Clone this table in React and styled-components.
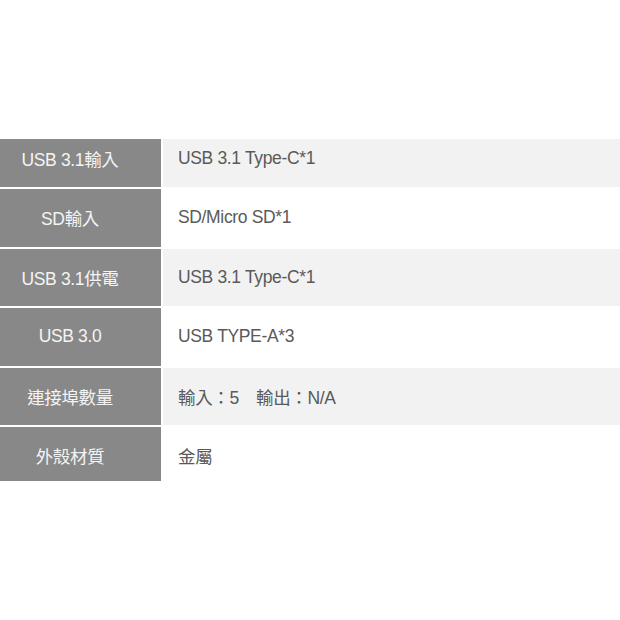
import React from 'react';
import styled, {createGlobalStyle} from 'styled-components';

const SPECS = [
  {label: 'USB 3.1輸入', value: 'USB 3.1 Type-C*1'},
  {label: 'SD輸入', value: 'SD/Micro SD*1'},
  {label: 'USB 3.1供電', value: 'USB 3.1 Type-C*1'},
  {label: 'USB 3.0', value: 'USB TYPE-A*3'},
  {label: '連接埠數量', value: '輸入：5　輸出：N/A'},
  {label: '外殼材質', value: '金屬'},
];

const GlobalStyle = createGlobalStyle`
  html, body {
    margin: 0;
    padding: 0;
    background: #fff;
  }
  body {
    font-family: "Liberation Sans", "Noto Sans CJK TC", sans-serif;
  }
`;

function App() {
  return (
    <>
      <GlobalStyle />
      <Frame>
        <Table>
          {SPECS.map((spec, i) => (
            <Row key={spec.label}>
              <Label>{spec.label}</Label>
              <Value $shaded={i % 2 === 0}>{spec.value}</Value>
            </Row>
          ))}
        </Table>
      </Frame>
    </>
  );
}

const Frame = styled.div`
  margin-top: 139px;
  width: 620px;
  height: 342px;
  overflow: hidden;
`;

const Table = styled.div`
  margin-top: -9.5px;
  display: flex;
  flex-direction: column;
`;

const Row = styled.div`
  display: grid;
  grid-template-columns: 161px 1fr;
  column-gap: 2px;
  height: 57.5px;
  border-bottom: 2px solid #fff;
  font-size: 17.5px;
  letter-spacing: -0.35px;
`;

const Label = styled.div`
  display: flex;
  align-items: center;
  justify-content: center;
  padding-right: 21px;
  background: #888;
  color: #f4f4f4;
`;

const Value = styled.div`
  display: flex;
  align-items: center;
  padding-left: 15px;
  background: ${(p) => (p.$shaded ? '#f2f2f2' : '#fff')};
  color: #5a5a5a;
  white-space: pre;
`;

export default App;
